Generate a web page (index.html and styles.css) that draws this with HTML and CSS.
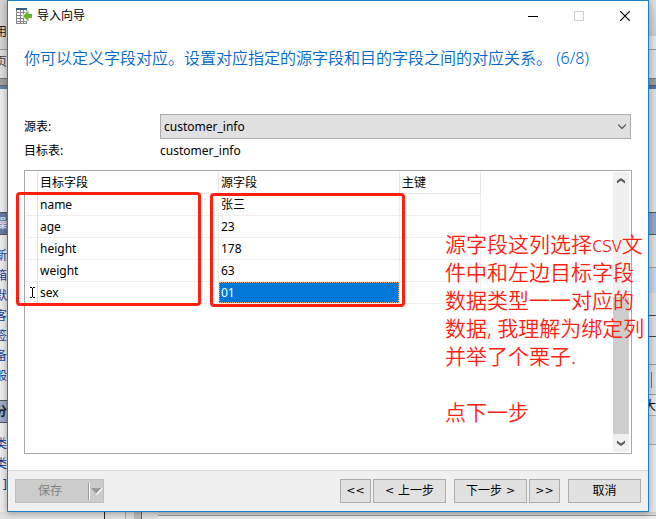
FILE: index.html
```html
<!DOCTYPE html>
<html lang="zh-CN">
<head>
<meta charset="utf-8">
<title>导入向导</title>
<link rel="stylesheet" href="styles.css">
</head>
<body>
<div class="desktop">
  <aside class="edge edge-left">
    <span class="menu">用</span>
    <span class="tab">首页</span>
    <span class="group">操</span>
    <ul class="links">
      <li>新</li><li>箱</li><li>默</li><li>客</li><li>签</li><li>备</li><li>般</li>
    </ul>
    <span class="group group-light">分</span>
    <ul class="links">
      <li>类</li><li>类</li><li>]</li>
    </ul>
  </aside>

  <main class="window">
    <header class="titlebar">
      <svg class="app-icon" width="16" height="16" viewBox="0 0 16 16" aria-hidden="true">
        <path d="M0 0h11v16H0z" fill="#888"/>
        <path d="M0 0h11v2H0z" fill="#356080"/>
        <path d="M1 2h3v2H1zM5 2h2v2H5zM8 2h2v2H8zM1 5h3v2H1zM5 5h2v2H5zM8 5h2v2H8zM1 8h3v2H1zM5 8h2v2H5zM8 8h2v2H8zM1 11h3v2H1zM5 11h2v2H5zM8 11h2v2H8zM1 14h3v1H1zM5 14h2v1H5zM8 14h2v1H8z" fill="#fff"/>
        <path d="M6 8l6-6.500V5h4v6h-4v3.500z" fill="#fff"/>
        <path d="M7 8l5.500-5.500V6H16v4h-3.500v3.500z" fill="#65b32e"/>
      </svg>
      <span class="title">导入向导</span>
      <button class="caption" type="button" aria-label="最小化"><svg width="10" height="10"><path d="M0 5.500h10" stroke="#000"/></svg></button>
      <button class="caption" type="button" aria-label="最大化" disabled><svg width="10" height="10"><path d="M.5.5h9v9h-9z" fill="none" stroke="#ccc"/></svg></button>
      <button class="caption" type="button" aria-label="关闭"><svg width="10" height="10"><path d="M0 0l10 10M10 0L0 10" stroke="#000" stroke-width="1.200"/></svg></button>
    </header>

    <h1>你可以定义字段对应。设置对应指定的源字段和目的字段之间的对应关系。 (6/8)</h1>

    <div class="form">
      <label for="source">源表:</label>
      <div class="select-wrap">
        <select id="source"><option>customer_info</option></select>
        <svg class="chevron" width="8" height="5"><path d="M0 .5l4 4 4-4" fill="none" stroke="#555" stroke-width="1.200"/></svg>
      </div>
      <span>目标表:</span>
      <span>customer_info</span>
    </div>

    <section class="grid-frame">
      <div class="grid-area">
        <table>
          <colgroup><col class="col-mark"><col class="col-field"><col class="col-field"><col class="col-key"></colgroup>
          <thead><tr><th></th><th>目标字段</th><th>源字段</th><th>主键</th></tr></thead>
          <tbody>
            <tr><td></td><td>name</td><td>张三</td><td></td></tr>
            <tr><td></td><td>age</td><td>23</td><td></td></tr>
            <tr><td></td><td>height</td><td>178</td><td></td></tr>
            <tr><td></td><td>weight</td><td>63</td><td></td></tr>
            <tr>
              <td class="mark"><svg width="7" height="11"><path d="M1 .5h2M4 .5h2M1 10.500h2M4 10.500h2M3.500 1v9" stroke="#000"/></svg></td>
              <td>sex</td><td class="selected"><span>01</span></td><td></td>
            </tr>
          </tbody>
        </table>
        <div class="box box-target"></div>
        <div class="box box-source"></div>
      </div>
      <div class="scrollbar">
        <svg width="8" height="6"><path d="M0 5.500V3l4-3 4 3v2.500L4 2.500z" fill="#555"/></svg>
        <div class="thumb"></div>
        <svg width="8" height="6"><path d="M0 .5V3l4 3 4-3V.5l-4 3z" fill="#555"/></svg>
      </div>
      <div class="note">源字段这列选择csv文<br>件中和左边目标字段<br>数据类型一一对应的<br>数据, 我理解为绑定列<br>并举了个栗子.<br><br>点下一步</div>
    </section>

    <footer class="actions">
      <button class="btn save" type="button" disabled>
        <span class="save-text">保存</span>
        <svg width="15" height="17"><path d="M.5 0v17" stroke="#999"/><path d="M1.500 0v17" stroke="#fff"/><path d="M3 5h11l-5.500 6z" fill="#999"/><path d="M14 5.500L8.500 11.500" stroke="#fff" stroke-width="1.500"/></svg>
      </button>
      <div class="pair">
        <button class="btn small" type="button"><span class="arrows">&lt;&lt;</span></button>
        <button class="btn" type="button"><span class="arrows">&lt;</span> 上一步</button>
      </div>
      <div class="pair">
        <button class="btn" type="button">下一步 <span class="arrows">&gt;</span></button>
        <button class="btn small" type="button"><span class="arrows">&gt;&gt;</span></button>
      </div>
      <button class="btn" type="button">取消</button>
    </footer>
  </main>

  <aside class="edge edge-right">
    <span class="bar"></span>
    <span class="big">大</span>
  </aside>
  <div class="edge-bottom"></div>
</div>
</body>
</html>
```

FILE: styles.css
```css
* { box-sizing: border-box; }

body {
  margin: 0;
  font: 12px/16px "Noto Sans", "Noto Sans CJK SC", sans-serif;
  color: #000;
}

.desktop {
  display: grid;
  grid-template-columns: 7px minmax(0, 1fr) 7px;
  grid-template-rows: 1fr 7px;
  height: 100vh;
  overflow: hidden;
}

/* Applications visible behind the dialog */
.edge {
  display: flex;
  flex-direction: column;
  align-items: flex-end;
  overflow: hidden;
  white-space: nowrap;
}

.edge-left {
  background: linear-gradient(#d4d4d4 49px, #999 49px 50px, #ddd 50px 78px, #777 78px 79px, #a0a0a0 79px 85px, #666 85px 86px, #6680b3 86px 89px, #ececec 89px);
}

.edge-left > * { flex: none; }
.menu { margin-top: 24px; color: #222; }
.tab { margin-top: 14px; color: #444; }

.group {
  display: flex;
  justify-content: flex-end;
  align-items: center;
  width: 100%;
  height: 23px;
  margin-top: 142px;
  border: solid #555;
  border-width: 1px 0;
  background: #6478a4;
  color: #d8deea;
  font-weight: bold;
}

.group-light {
  margin-top: 14px;
  background: #9dacc9;
  color: #222;
}

.links {
  display: flex;
  flex-direction: column;
  align-items: flex-end;
  margin: 11px 0 0;
  padding: 0;
  list-style: none;
  line-height: 20px;
  color: #173a91;
}

.links li { display: flex; }

.edge-right {
  background: linear-gradient(#dedede, #cacaca 36px, #e4e4e4 36px 49px, #999 49px 50px, #ddd 50px 78px, #777 78px 79px, #999 79px 85px, #555 85px 86px, #56709f 86px 89px, #ddd 89px 212px, #555 212px 213px, #94a5c5 213px 234px, #555 234px 235px, #ddd 235px 267px, #999 267px 268px, #c8d3e3 268px 293px, #ddd 293px 315px, #444 315px 316px, #ddd 316px 336px, #444 336px 337px, #ddd 337px 364px, #999 364px 365px, #ddd 365px 394px, #999 394px 395px, #e4e4e4 395px 415px, #aaa 415px 416px, #ddd 416px 444px, #aaa 444px 445px, #e8e8e8 445px);
}

.bar {
  flex: none;
  width: 1px;
  height: 16px;
  margin: 372px 4px 0 0;
  background: #777;
}

.big { margin-top: 10px; }

.edge-bottom {
  grid-column: 1 / -1;
  background: linear-gradient(to right, #e0e0e0 104px, #222 104px 105px, #e0e0e0 105px 125px, #aaa 125px 126px, #ddd 126px 134px, #bbb 134px 141px, #1a72b5 141px 142px, #ddd 142px 158px, transparent 158px),
    linear-gradient(#ccc, #ddd 3px, #999 3px 4px, #eee 4px);
}

/* Dialog */
.window {
  z-index: 1;
  display: flex;
  flex-direction: column;
  border: 1px solid #1b7fcc;
  background: #fff;
  box-shadow: 0 1px 7px rgba(0, 0, 0, .35);
}

.titlebar {
  display: flex;
  align-items: center;
  height: 30px;
  padding-left: 8px;
}

.title { flex: 1; margin-left: 5px; }

.caption {
  display: flex;
  align-items: center;
  justify-content: center;
  width: 46px;
  height: 30px;
  padding: 0;
  border: 0;
  background: none;
}

h1 {
  margin: 15px 16px 0;
  font-size: 16px;
  font-weight: 350;
  line-height: 24px;
  color: #0066cc;
  white-space: nowrap;
}

.form {
  display: grid;
  grid-template-columns: 136px 1fr;
  grid-template-rows: 25px 24px;
  align-items: center;
  margin: 44px 17px 0 16px;
}

.select-wrap { position: relative; }

select {
  display: block;
  width: 100%;
  height: 25px;
  padding: 0 3px;
  appearance: none;
  border: 1px solid #adadad;
  border-radius: 0;
  background: #e1e1e1;
  font: inherit;
  color: inherit;
}

.chevron {
  position: absolute;
  top: 10px;
  right: 5px;
}

.grid-frame {
  position: relative;
  display: flex;
  flex: 1;
  margin: 7px 16px 16px;
  padding: 1px;
  border: 1px solid #a5a8ad;
}

.grid-area { position: relative; flex: 1; }

table {
  width: 455px;
  table-layout: fixed;
  border-collapse: separate;
  border-spacing: 0;
}

.col-mark { width: 12px; }
.col-field { width: 181px; }
.col-key { width: 81px; }

th, td {
  height: 22px;
  padding: 0 2px;
  border: solid #e5e5e5;
  border-width: 0 1px 1px 0;
  font-weight: normal;
  text-align: left;
}

td { border-color: #eee; }
td:first-child { border-right-color: #ddd; }
.mark { padding: 0 0 0 3px; }
.mark svg { display: block; }
.selected { padding: 0; }

.selected span {
  display: flex;
  align-items: center;
  height: 21px;
  padding: 0 1px;
  border: 1px dotted #f0a060;
  background: #0078d7;
  color: #fff;
}

/* Red annotation marks over the table */
.box {
  position: absolute;
  border: 3px solid #ff2010;
  border-radius: 4px;
}

.box-target { top: 20px; left: -10px; width: 185px; height: 114px; }
.box-source { top: 21px; left: 184px; width: 195px; height: 114px; }

.note {
  position: absolute;
  top: 59px;
  left: 420px;
  font-size: 21px;
  font-weight: 350;
  line-height: 28px;
  color: #ff2010;
  white-space: nowrap;
}

.scrollbar {
  display: flex;
  flex-direction: column;
  align-items: center;
  justify-content: space-between;
  width: 16px;
  margin-right: 1px;
  padding: 6px 0;
  background: #f0f0f0;
}

.thumb {
  width: 100%;
  height: 137px;
  margin: auto 0 6px;
  background: #cdcdcd;
}

.actions {
  display: flex;
  gap: 8px;
  padding: 8px 7px;
  border-top: 1px solid #d9d9d9;
  background: #f0f0f0;
}

.btn {
  display: flex;
  align-items: center;
  justify-content: center;
  gap: 4px;
  width: 73px;
  height: 24px;
  padding: 0;
  border: 1px solid #adadad;
  background: #e1e1e1;
  font: inherit;
  color: #000;
}

.small { width: 31px; }
.pair { display: flex; gap: 2px; }
.arrows { font-family: "DejaVu Sans", sans-serif; font-size: 11px; }

.save {
  width: 89px;
  margin-right: auto;
  border-color: #bfbfbf;
  background: #ccc;
  color: #838383;
}

.save-text { flex: 1; }
```
